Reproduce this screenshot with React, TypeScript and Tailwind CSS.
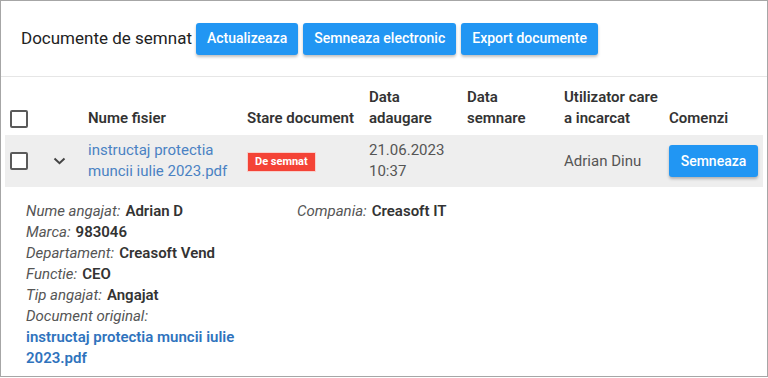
import React from 'react';

const details = [
  { label: 'Nume angajat', value: 'Adrian D' },
  { label: 'Marca', value: '983046' },
  { label: 'Departament', value: 'Creasoft Vend' },
  { label: 'Functie', value: 'CEO' },
  { label: 'Tip angajat', value: 'Angajat' },
];

function Checkbox() {
  return <span className="block size-[18px] rounded-[2px] border-2 border-[#5a5a5a] bg-white" />;
}

function ActionButton({ children }: { children: React.ReactNode }) {
  return (
    <button
      type="button"
      className="h-8 rounded-[3px] bg-[#2196f3] px-[11px] text-[14px] font-medium text-white shadow-[0_2px_3px_rgba(0,0,0,0.25)]"
    >
      {children}
    </button>
  );
}

export default function App() {
  return (
    <div className="h-[377px] w-[768px] overflow-hidden border border-[#a6a6a6] bg-white font-['Roboto',sans-serif] text-[15px] text-[#444]">
      <div className="flex h-[76px] items-center border-b border-[#e6e6e6] pl-5">
        <h1 className="mr-1 text-[17px] text-[#222]">Documente de semnat</h1>
        <div className="flex gap-[5px]">
          <ActionButton>Actualizeaza</ActionButton>
          <ActionButton>Semneaza electronic</ActionButton>
          <ActionButton>Export documente</ActionButton>
        </div>
      </div>

      <div className="px-1">
        <div className="grid grid-cols-[40px_43px_159px_122px_98px_97px_105px_1fr] items-end pt-[10px] pb-[6px] font-semibold leading-[21px] text-[#333]">
          <div className="pl-[5px] pb-[1px]">
            <Checkbox />
          </div>
          <div />
          <div>Nume fisier</div>
          <div>Stare document</div>
          <div>
            Data
            <br />
            adaugare
          </div>
          <div>
            Data
            <br />
            semnare
          </div>
          <div>
            Utilizator care
            <br />a incarcat
          </div>
          <div>Comenzi</div>
        </div>

        <div className="grid h-[52px] grid-cols-[40px_43px_159px_122px_98px_97px_105px_1fr] items-center bg-[#eeeeee] leading-[21px]">
          <div className="pl-[5px]">
            <Checkbox />
          </div>
          <div className="pl-[8px]">
            <svg width="13" height="8" viewBox="0 0 13 8" fill="none">
              <path d="M1.5 1.5 6.5 6.2 11.5 1.5" stroke="#444" strokeWidth="2" />
            </svg>
          </div>
          <a className="text-[#4a82c3]">
            instructaj protectia
            <br />
            muncii iulie 2023.pdf
          </a>
          <div>
            <span className="inline-block border border-[#f7d0cc] bg-[#f44336] px-[7px] text-[11px] font-bold leading-[18px] text-white">
              De semnat
            </span>
          </div>
          <div className="text-[#555]">
            21.06.2023
            <br />
            10:37
          </div>
          <div />
          <div className="text-[#555]">Adrian Dinu</div>
          <div>
            <button
              type="button"
              className="h-8 w-[89px] rounded-[3px] bg-[#2196f3] text-[14px] font-medium text-white shadow-[0_2px_3px_rgba(0,0,0,0.25)]"
            >
              Semneaza
            </button>
          </div>
        </div>
      </div>

      <div className="grid grid-cols-[271px_1fr] pt-[14px] pl-[25px] leading-[21px]">
        <div className="pr-[36px]">
          {details.map((item) => (
            <div key={item.label}>
              <span className="mr-[5px] italic text-[#555]">{item.label}:</span>
              <span className="font-semibold text-[#333]">{item.value}</span>
            </div>
          ))}
          <div className="italic text-[#555]">Document original:</div>
          <a className="font-semibold text-[#2f73bd]">instructaj protectia muncii iulie 2023.pdf</a>
        </div>
        <div>
          <span className="mr-[5px] italic text-[#555]">Compania:</span>
          <span className="font-semibold text-[#333]">Creasoft IT</span>
        </div>
      </div>
    </div>
  );
}
